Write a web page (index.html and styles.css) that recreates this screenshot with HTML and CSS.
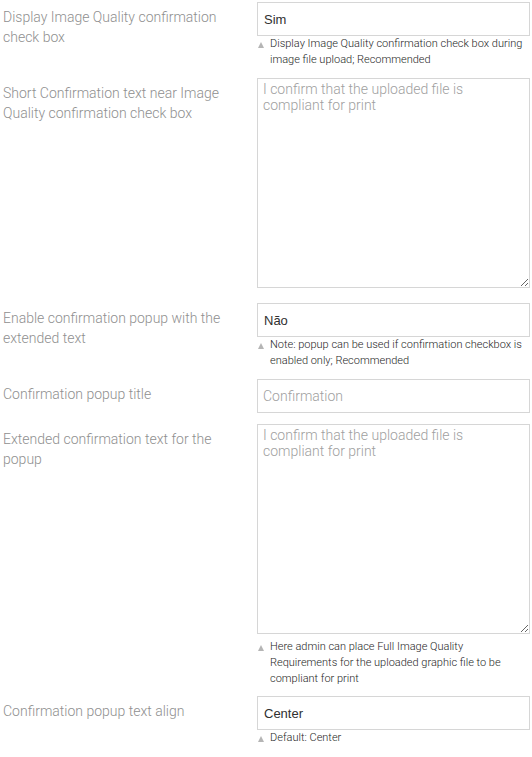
FILE: index.html
```html
<!DOCTYPE html>
<html>
<head>
<meta charset="utf-8">
<link rel="stylesheet" href="styles.css">
</head>
<body>
<div class="form">
  <div class="row">
    <div class="label">Display Image Quality confirmation check box</div>
    <div class="value">
      <div class="field select">Sim</div>
      <div class="note">Display Image Quality confirmation check box during image file upload; Recommended</div>
    </div>
  </div>
  <div class="row">
    <div class="label">Short Confirmation text near Image Quality confirmation check box</div>
    <div class="value">
      <textarea class="area" placeholder="I confirm that the uploaded file is compliant for print"></textarea>
    </div>
  </div>
  <div class="row">
    <div class="label">Enable confirmation popup with the extended text</div>
    <div class="value">
      <div class="field select">Não</div>
      <div class="note">Note: popup can be used if confirmation checkbox is enabled only; Recommended</div>
    </div>
  </div>
  <div class="row row-plain">
    <div class="label">Confirmation popup title</div>
    <div class="value">
      <input class="field text" type="text" placeholder="Confirmation">
    </div>
  </div>
  <div class="row row-tight">
    <div class="label">Extended confirmation text for the popup</div>
    <div class="value">
      <textarea class="area" placeholder="I confirm that the uploaded file is compliant for print"></textarea>
      <div class="note">Here admin can place Full Image Quality Requirements for the uploaded graphic file to be compliant for print</div>
    </div>
  </div>
  <div class="row">
    <div class="label">Confirmation popup text align</div>
    <div class="value">
      <div class="field select">Center</div>
      <div class="note">Default: Center</div>
    </div>
  </div>
</div>
</body>
</html>
```
FILE: styles.css
```css
html, body {
  margin: 0;
  padding: 0;
  background: #fff;
}
.form {
  padding: 2px 2px 0 3px;
  font-family: Roboto, "Liberation Sans", sans-serif;
}
.row {
  display: grid;
  grid-template-columns: 254px 1fr;
  margin-bottom: 10px;
}
.row-plain {
  margin-bottom: 11px;
}
.row-tight {
  margin-bottom: 9px;
}
.label {
  font-size: 14px;
  font-weight: 300;
  line-height: 20px;
  color: #8f8f8f;
  padding-top: 5px;
  padding-right: 20px;
}
.value {
  min-width: 0;
}
.field {
  display: block;
  box-sizing: border-box;
  width: 100%;
  height: 34px;
  margin: 0;
  border: 1px solid #d6d6d6;
  background: #fff;
  outline: none;
}
.select {
  font-family: "Liberation Sans", Arial, sans-serif;
  font-size: 13px;
  color: #303030;
  line-height: 32px;
  padding: 1px 6px 0;
}
.text {
  font-family: Roboto, sans-serif;
  font-size: 14px;
  font-weight: 300;
  padding: 0 5px;
  color: #303030;
}
.text::placeholder, .area::placeholder {
  color: #a0a0a0;
  opacity: 1;
}
.area {
  display: block;
  box-sizing: border-box;
  width: 100%;
  height: 210px;
  margin: 0 0 5px 0;
  border: 1px solid #d6d6d6;
  padding: 2px 5px;
  font-family: Roboto, sans-serif;
  font-size: 14px;
  font-weight: 300;
  line-height: 16px;
  color: #303030;
  resize: vertical;
  outline: none;
}
.note {
  position: relative;
  font-size: 11px;
  font-weight: 300;
  line-height: 16px;
  color: #262626;
  padding-left: 13px;
  padding-top: 0;
}
.note::before {
  content: "";
  position: absolute;
  left: 1px;
  top: 6px;
  width: 0;
  height: 0;
  border-left: 3.5px solid transparent;
  border-right: 3.5px solid transparent;
  border-bottom: 6px solid #b5b5b5;
}
```
